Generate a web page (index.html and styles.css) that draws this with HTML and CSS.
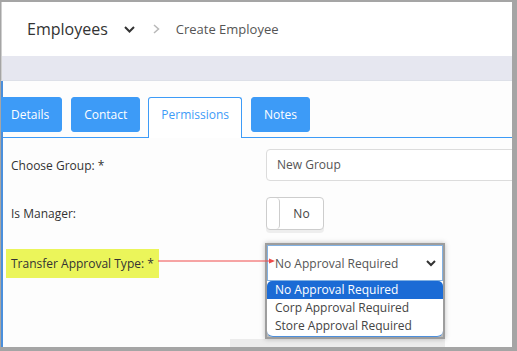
FILE: index.html
```html
<!DOCTYPE html>
<html>
<head>
  <title>Create Employee</title>
  <link rel="stylesheet" href="styles.css">
</head>
<body>
  <div class="screen">
    <header class="topbar">
      <span class="crumb-main">Employees</span>
      <svg class="crumb-caret" width="11" height="7" viewBox="0 0 11 7"><polyline points="1,1 5.5,5.5 10,1" fill="none" stroke="#333" stroke-width="2"/></svg>
      <svg class="crumb-sep" width="7" height="10" viewBox="0 0 7 10"><polyline points="1,1 5.5,5 1,9" fill="none" stroke="#b8b8b8" stroke-width="1.5"/></svg>
      <span class="crumb-current">Create Employee</span>
    </header>
    <div class="subbar"></div>

    <div class="content">
      <nav class="tabs">
        <a class="tab first">Details</a>
        <a class="tab">Contact</a>
        <a class="tab active">Permissions</a>
        <a class="tab">Notes</a>
      </nav>

      <div class="form">
        <label class="form-label">Choose Group: *</label>
        <div class="form-control">
          <div class="input">New Group</div>
        </div>

        <label class="form-label">Is Manager:</label>
        <div class="form-control">
          <div class="toggle">
            <span class="toggle-knob"></span>
            <span class="toggle-text">No</span>
          </div>
        </div>

        <label class="form-label highlight">Transfer Approval Type: *</label>
        <div class="form-control">
          <div class="select-wrap">
            <div class="select-box">
              <span>No Approval Required</span>
              <svg width="10" height="7" viewBox="0 0 10 7"><polyline points="1,1 5,5 9,1" fill="none" stroke="#333" stroke-width="2"/></svg>
            </div>
            <ul class="select-list">
              <li class="selected">No Approval Required</li>
              <li>Corp Approval Required</li>
              <li>Store Approval Required</li>
            </ul>
          </div>
        </div>
      </div>
      <div class="strip"></div>
    </div>

    <!-- annotation arrow -->
    <svg class="pointer" width="120" height="8" viewBox="0 0 120 8">
      <line x1="0" y1="4" x2="113" y2="4" stroke="#ef4a4a" stroke-width="1"/>
      <polygon points="111,1.5 117,4 111,6.5" fill="#ef4a4a"/>
    </svg>
  </div>
</body>
</html>
```

FILE: styles.css
```css
body {
  margin: 0;
  font-family: "Open Sans", Arial, sans-serif;
  color: #333;
}
.screen {
  position: relative;
  width: 517px;
  height: 351px;
  box-sizing: border-box;
  border: 2px solid #a5a5a5;
  border-left-width: 1px;
  border-right-width: 5px;
  border-bottom-width: 4px;
  overflow: hidden;
  background: #fdfdfd;
}

/* Breadcrumb bar */
.topbar {
  display: flex;
  align-items: center;
  height: 54px;
  padding-left: 25px;
  border-left: 1px solid #cfcfcf;
  background: #fff;
}
.crumb-main {
  font-size: 16px;
  color: #333;
}
.crumb-caret {
  margin-left: 16px;
}
.crumb-sep {
  margin-left: 18px;
}
.crumb-current {
  margin-left: 16px;
  font-size: 13px;
  color: #555;
}
.subbar {
  height: 24px;
  background: #e6e7f0;
  border-bottom: 1px solid #dde0e8;
  border-left: 1px solid #cfcfcf;
}

/* Tabs */
.content {
  padding-top: 16px;
  border-left: 2px solid #4a8fdc;
}
.tabs {
  display: flex;
  align-items: flex-start;
  gap: 9px;
  height: 40px;
  border-bottom: 1px solid #3d9bf7;
}
.tab {
  box-sizing: border-box;
  height: 35px;
  line-height: 33px;
  padding: 0 12px;
  font-size: 12px;
  color: #fff;
  background: #3d9bf7;
  border: 1px solid #3d9bf7;
  border-radius: 3px;
}
.tab.first {
  margin-left: -5px;
}
.tab.active {
  height: 41px;
  margin-left: -1px;
  color: #3d9bf7;
  background: #fff;
  border-bottom: none;
  border-radius: 3px 3px 0 0;
}

/* Form */
.form {
  display: grid;
  grid-template-columns: 255px 1fr;
  row-gap: 16px;
  align-items: center;
  padding: 11px 0 0 8px;
  font-size: 12px;
}
.form-label {
  color: #333;
}
.form-label.highlight {
  align-self: start;
  justify-self: start;
  margin: 3px 0 0 -5px;
  padding: 0 5px;
  height: 29px;
  line-height: 29px;
  background: #ebf55a;
}
.input {
  box-sizing: border-box;
  width: 280px;
  height: 32px;
  line-height: 30px;
  padding-left: 10px;
  border: 1px solid #dcdcdc;
  border-radius: 4px;
  background: #fff;
  color: #555;
}
.toggle {
  box-sizing: border-box;
  display: flex;
  width: 58px;
  height: 33px;
  border: 1px solid #cdcdcd;
  border-radius: 4px;
  background: #fff;
  box-shadow: 0 3px 0 #eeeeee;
}
.toggle-knob {
  width: 12px;
  border-right: 1px solid #cdcdcd;
  border-radius: 4px;
}
.toggle-text {
  flex: 1;
  text-align: center;
  line-height: 31px;
  color: #444;
}

/* Open select */
.select-wrap {
  width: 176px;
  margin: -3px 0 0 -1px;
  border: 2px solid #9d9d9d;
  background: #b9b9b9;
  box-shadow: 0 0 5px rgba(0, 0, 0, 0.25);
}
.select-box {
  box-sizing: border-box;
  display: flex;
  align-items: center;
  justify-content: space-between;
  height: 36px;
  padding: 0 6px 0 7px;
  border: 1px solid #82b1e2;
  background: #fff;
  color: #555;
}
.select-list {
  list-style: none;
  margin: 0;
  padding: 0 0 1px 0;
  background: #fff;
  border-bottom: 1px solid #4d8fdc;
  border-radius: 0 0 6px 6px;
}
.select-list li {
  height: 18px;
  line-height: 18px;
  padding-left: 8px;
  color: #444;
}
.select-list li.selected {
  background: #1b6bd5;
  color: #fff;
  border-radius: 5px 5px 0 0;
}
.strip {
  width: 215px;
  height: 9px;
  margin-left: 227px;
  background: #ececec;
}

/* Annotation */
.pointer {
  position: absolute;
  left: 157px;
  top: 255px;
}
```
